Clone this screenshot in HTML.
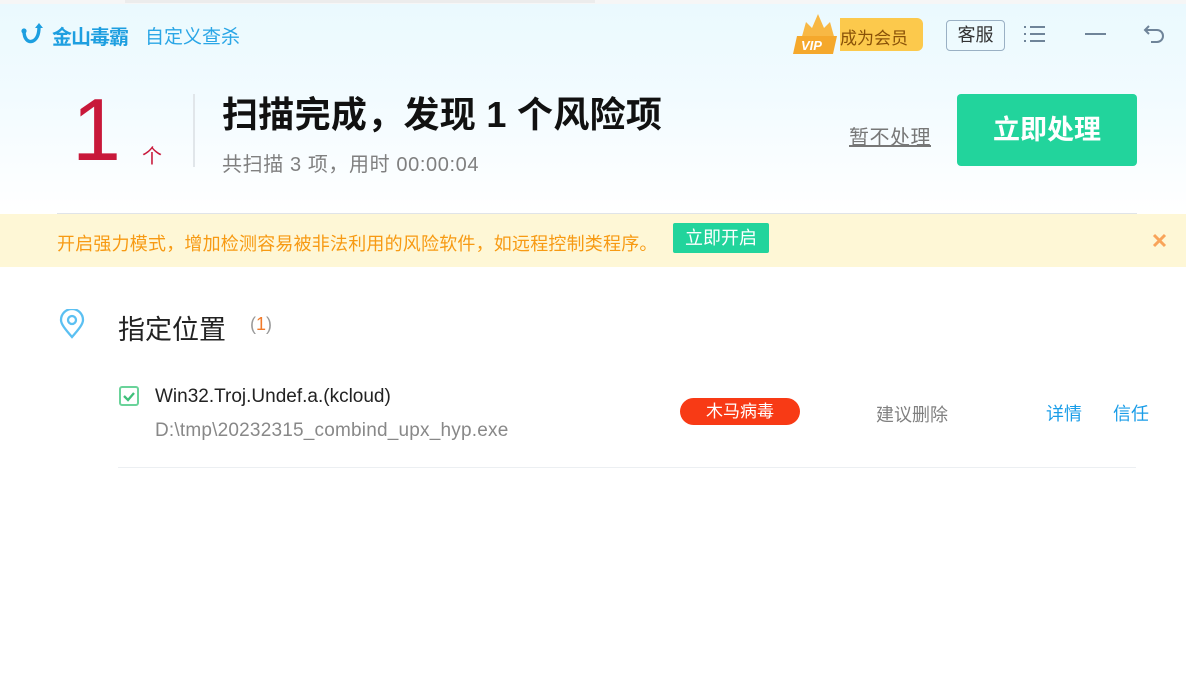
<!DOCTYPE html>
<html><head><meta charset="utf-8"><style>
*{margin:0;padding:0;box-sizing:border-box}
body{width:1186px;height:690px;overflow:hidden;background:#fff;font-family:"Liberation Sans","Noto Sans CJK SC",sans-serif;position:relative}
.abs{position:absolute;white-space:nowrap}
.hdr{position:absolute;left:0;top:0;width:1186px;height:214px;background:linear-gradient(#eaf9fe 0%,#f2fbff 45%,#fff 100%)}
</style></head><body>
<div class="hdr"></div>
<div class="abs" style="left:0;top:0;width:1186px;height:4px;background:#f6f6f6"></div>
<div class="abs" style="left:125px;top:0;width:470px;height:3px;background:#ececec"></div>
<svg class="abs" style="left:20px;top:21px" width="26" height="26" viewBox="0 0 26 26"><path d="M4 10c0 8 4 12 9 10 4-2 6-7 6-14" fill="none" stroke="#1d9fe0" stroke-width="3.4" stroke-linecap="round"/><path d="M15 7l4-5 4 5z" fill="#1d9fe0"/><circle cx="4" cy="10" r="2.6" fill="#1d9fe0"/></svg>
<div class="abs" style="left:52px;top:21px;font-size:20px;font-weight:bold;color:#1e9fe0;letter-spacing:-1px">金山毒霸</div>
<div class="abs" style="left:145px;top:22px;font-size:19px;color:#2aa6e6">自定义查杀</div>
<div class="abs" style="left:840px;top:18px;width:83px;height:33px;background:#fcc94c;border-radius:0 6px 6px 0"></div>
<svg class="abs" style="left:793px;top:12px" width="50" height="42" viewBox="0 0 50 42"><path d="M8 28l5-18 6 6 6-14 6 14 6-6 5 18z" fill="#f8b844"/><path d="M4 24h40l-4 18H0z" fill="#f5a82c"/><text x="8" y="38" font-size="13" font-weight="bold" font-style="italic" fill="#fff" font-family="Liberation Sans">VIP</text></svg>
<div class="abs" style="left:840px;top:24px;font-size:17px;color:#8a5208">成为会员</div>
<div class="abs" style="left:946px;top:20px;width:59px;height:31px;border:1.5px solid #9ab0c4;border-radius:4px;font-size:18px;color:#333;text-align:center;line-height:28px">客服</div>
<svg class="abs" style="left:1023px;top:24px" width="24" height="20"><g stroke="#6f8499" stroke-width="2"><path d="M1 3h2M7 3h15M1 10h2M7 10h15M1 17h2M7 17h15"/></g></svg>
<div class="abs" style="left:1085px;top:33px;width:21px;height:2px;background:#6f8499"></div>
<svg class="abs" style="left:1143px;top:22px" width="24" height="24" viewBox="0 0 24 24"><path d="M6 4L2 8l4 4M2 8h12a6 6 0 010 12H8" fill="none" stroke="#6f8499" stroke-width="2"/></svg>
<div class="abs" style="left:72px;top:80px;font-size:88px;color:#c8183a;line-height:100px">1</div>
<div class="abs" style="left:142px;top:140px;font-size:20px;color:#c8183a">个</div>
<div class="abs" style="left:193px;top:94px;width:2px;height:73px;background:#e1e6ea"></div>
<div class="abs" style="left:222px;top:86px;font-size:36px;font-weight:bold;color:#111;letter-spacing:0.3px">扫描完成，发现 1 个风险项</div>
<div class="abs" style="left:222px;top:148px;font-size:20px;color:#808080;letter-spacing:0.6px">共扫描 3 项，用时 00:00:04</div>
<div class="abs" style="left:849px;top:121px;font-size:20px;color:#777;text-decoration:underline;letter-spacing:0.5px">暂不处理</div>
<div class="abs" style="left:957px;top:94px;width:180px;height:72px;background:#22d49c;border-radius:4px;color:#fff;font-size:27px;font-weight:bold;text-align:center;line-height:72px">立即处理</div>
<div class="abs" style="left:57px;top:213px;width:1080px;height:1px;background:#e0e4e8"></div>
<div class="abs" style="left:0;top:214px;width:1186px;height:53px;background:#fef7d6"></div>
<div class="abs" style="left:57px;top:230px;font-size:18px;color:#f79a13;letter-spacing:0.2px">开启强力模式，增加检测容易被非法利用的风险软件，如远程控制类程序。</div>
<div class="abs" style="left:673px;top:223px;width:96px;height:30px;background:#22d49c;border-radius:2px;color:#fff;font-size:18px;text-align:center;line-height:30px">立即开启</div>
<svg class="abs" style="left:1152px;top:233px" width="15" height="15"><path d="M2 2l11 11M13 2L2 13" stroke="#f9a45a" stroke-width="3"/></svg>
<svg class="abs" style="left:59px;top:309px" width="26" height="30" viewBox="0 0 26 30"><path d="M13 28C6 20 2 15 2 11a11 11 0 0122 0c0 4-4 9-11 17z" fill="none" stroke="#5bc0f2" stroke-width="2.3"/><circle cx="13" cy="11" r="4" fill="none" stroke="#5bc0f2" stroke-width="2.3"/></svg>
<div class="abs" style="left:118px;top:308px;font-size:27px;color:#222">指定位置</div>
<div class="abs" style="left:250px;top:314px;font-size:18px;color:#999">(<span style="color:#f17a2a">1</span>)</div>
<div class="abs" style="left:119px;top:386px;width:20px;height:20px;border:2px solid #6ad39a;border-radius:3px"></div>
<svg class="abs" style="left:119px;top:386px" width="20" height="20"><path d="M5 10l4 4 6-7" fill="none" stroke="#3fc07a" stroke-width="2.3"/></svg>
<div class="abs" style="left:155px;top:386px;font-size:19px;color:#222">Win32.Troj.Undef.a.(kcloud)</div>
<div class="abs" style="left:155px;top:420px;font-size:19px;color:#888;letter-spacing:0.2px">D:\tmp\20232315_combind_upx_hyp.exe</div>
<div class="abs" style="left:680px;top:398px;width:120px;height:27px;background:#f83a15;border-radius:14px;color:#fff;font-size:17px;text-align:center;line-height:27px">木马病毒</div>
<div class="abs" style="left:876px;top:401px;font-size:18px;color:#808080">建议删除</div>
<div class="abs" style="left:1046px;top:400px;font-size:18px;color:#1a9de8">详情</div>
<div class="abs" style="left:1113px;top:400px;font-size:18px;color:#1a9de8">信任</div>
<div class="abs" style="left:118px;top:467px;width:1018px;height:1px;background:#eceff2"></div>
</body></html>
